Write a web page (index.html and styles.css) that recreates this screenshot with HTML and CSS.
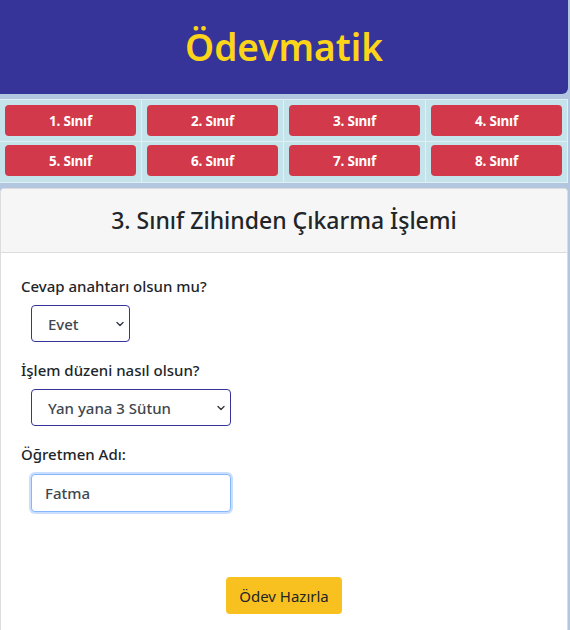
FILE: index.html
```html
<!DOCTYPE html>
<html lang="tr">
<head>
<meta charset="utf-8">
<title>Ödevmatik</title>
<link rel="stylesheet" href="styles.css">
</head>
<body>
<header class="banner">
  <h1 class="brand">Ödevmatik</h1>
</header>
<nav class="grades">
  <div class="cell"><a class="grade-btn" href="#">1. Sınıf</a></div>
  <div class="cell"><a class="grade-btn" href="#">2. Sınıf</a></div>
  <div class="cell"><a class="grade-btn" href="#">3. Sınıf</a></div>
  <div class="cell"><a class="grade-btn" href="#">4. Sınıf</a></div>
  <div class="cell"><a class="grade-btn" href="#">5. Sınıf</a></div>
  <div class="cell"><a class="grade-btn" href="#">6. Sınıf</a></div>
  <div class="cell"><a class="grade-btn" href="#">7. Sınıf</a></div>
  <div class="cell"><a class="grade-btn" href="#">8. Sınıf</a></div>
</nav>
<section class="card">
  <div class="card-header">
    <h2 class="card-title">3. Sınıf Zihinden Çıkarma İşlemi</h2>
  </div>
  <div class="card-body">
    <div class="group">
      <label class="label" for="cevap">Cevap anahtarı olsun mu?</label>
      <div class="select-wrap small">
        <select id="cevap" class="select">
          <option>Evet</option>
          <option>Hayır</option>
        </select>
        <svg class="chev" width="10" height="8" viewBox="0 0 16 16"><path d="M2 5l6 6 6-6" fill="none" stroke="#343a40" stroke-width="2.8" stroke-linecap="round" stroke-linejoin="round"/></svg>
      </div>
    </div>
    <div class="group">
      <label class="label" for="duzen">İşlem düzeni nasıl olsun?</label>
      <div class="select-wrap wide">
        <select id="duzen" class="select">
          <option>Yan yana 3 Sütun</option>
          <option>Alt alta</option>
        </select>
        <svg class="chev" width="10" height="8" viewBox="0 0 16 16"><path d="M2 5l6 6 6-6" fill="none" stroke="#343a40" stroke-width="2.8" stroke-linecap="round" stroke-linejoin="round"/></svg>
      </div>
    </div>
    <div class="group">
      <label class="label" for="ogretmen">Öğretmen Adı:</label>
      <input id="ogretmen" class="input" type="text" value="Fatma">
    </div>
    <div class="actions">
      <button class="submit" type="button">Ödev Hazırla</button>
    </div>
  </div>
</section>
</body>
</html>
```
FILE: styles.css
```css
* { box-sizing: border-box; }

body {
  margin: 0;
  background: #b2c6e0;
  font-family: "Noto Sans", "Open Sans", sans-serif;
  color: #212529;
  width: 568px;
}

.banner {
  background: #363498;
  height: 94px;
  border-bottom-right-radius: 6px;
  display: flex;
  align-items: center;
  justify-content: center;
}

.brand {
  margin: 0;
  color: #fcd418;
  font-size: 37px;
  font-weight: 600;
  line-height: 1;
  padding-bottom: 2px;
}

.grades {
  margin-top: 5px;
  background: #c4e3ea;
  display: grid;
  grid-template-columns: repeat(4, 1fr);
  border-top: 1px solid #e2eff3;
  border-bottom: 1px solid #e2eff3;
}

.cell {
  padding: 5px;
  border-right: 1px solid #e2eff3;
  height: 40px;
  display: flex;
  align-items: flex-start;
}
.cell:nth-child(-n+4) { border-bottom: 1px solid #e2eff3; height: 42px; }
.cell:nth-child(n+5) { padding-top: 3px; }

.grade-btn {
  flex: 1;
  display: flex;
  align-items: center;
  justify-content: center;
  height: 31px;
  background: #d2394a;
  color: #fff;
  border-radius: 4px;
  text-decoration: none;
  font-weight: 700;
  font-size: 13.5px;
  letter-spacing: -0.2px;
}

.card {
  margin-top: 5px;
  background: #fff;
  border: 1px solid #dcdcdc;
  border-radius: 4px;
  min-height: 460px;
}

.card-header {
  background: #f6f6f6;
  border-bottom: 1px solid #dcdcdc;
  height: 64px;
  display: flex;
  align-items: center;
  justify-content: center;
  border-radius: 4px 4px 0 0;
}

.card-title {
  margin: 0;
  font-size: 23px;
  font-weight: 500;
  color: #212529;
  padding-bottom: 2px;
}

.card-body {
  padding: 21px 20px 20px;
}

.group {
  display: flex;
  flex-direction: column;
  align-items: flex-start;
  margin-bottom: 16px;
}

.label {
  font-size: 15px;
  font-weight: 500;
  line-height: 24px;
  color: #212529;
}

.select-wrap {
  position: relative;
  margin: 7px 0 0 10px;
}
.select-wrap.small { width: 99px; }
.select-wrap.wide { width: 200px; }

.select {
  appearance: none;
  -webkit-appearance: none;
  width: 100%;
  height: 37px;
  border: 1px solid #36349a;
  border-radius: 4px;
  background: #fff;
  padding: 0 24px 0 16px;
  font-family: inherit;
  font-size: 15px;
  font-weight: 500;
  color: #41474e;
}

.chev {
  position: absolute;
  right: 5px;
  top: 15px;
  pointer-events: none;
}

.input {
  margin: 8px 0 0 10px;
  width: 200px;
  height: 38px;
  border: 1px solid #86b7fe;
  border-radius: 4px;
  box-shadow: 0 0 0 2px rgba(13, 110, 253, 0.22);
  padding: 0 13px;
  font-family: inherit;
  font-size: 15px;
  font-weight: 500;
  color: #41474e;
  outline: none;
}

.actions {
  display: flex;
  justify-content: center;
  padding-top: 49px;
}

.submit {
  background: #f8c11f;
  border: none;
  border-radius: 4px;
  width: 116px;
  height: 37px;
  font-family: inherit;
  font-size: 15px;
  color: #212529;
  cursor: pointer;
}
```
